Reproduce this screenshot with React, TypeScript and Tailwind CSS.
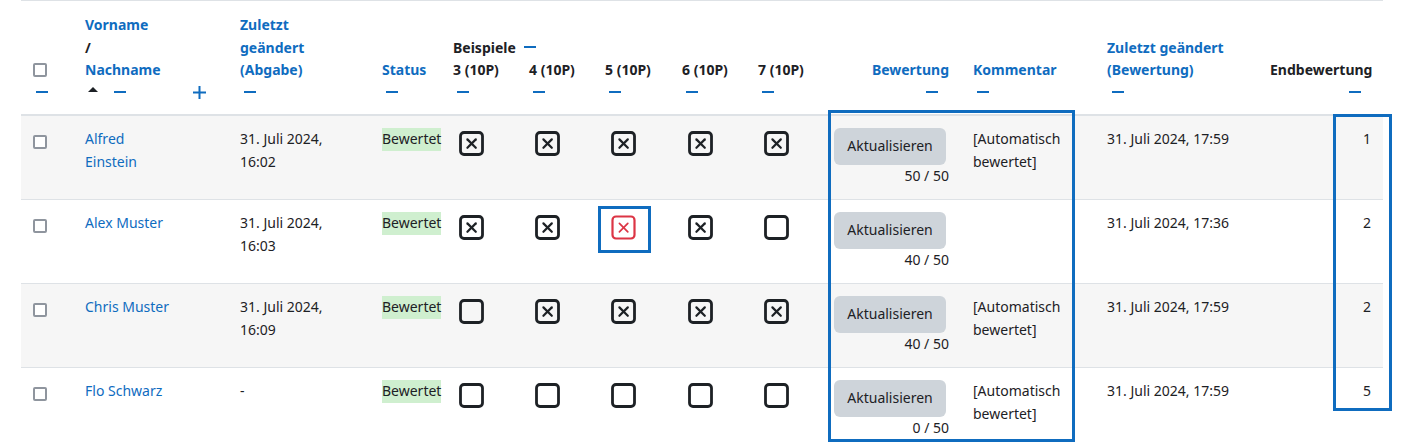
import React from "react";

const COLS =
  "grid grid-cols-[52px_108px_47px_142px_71px_76px_76px_77px_76px_76px_139px_134px_163px_125px]";

function Minus({ right = false, offset = "ml-[4px]" }: { right?: boolean; offset?: string }) {
  return (
    <div className={"flex h-[22.5px] items-center " + (right ? "justify-end" : "justify-start")}>
      <span className={"block h-[2px] w-[12px] shrink-0 bg-[#0f6cbf] -translate-y-[1px] " + offset} />
    </div>
  );
}

function SmallBox() {
  return <span className="block h-[14px] w-[14px] rounded-[2px] border-2 border-[#8f959e] bg-white" />;
}

function CheckIcon({ kind }: { kind: "x" | "empty" | "red" }) {
  const stroke = kind === "red" ? "#dc3545" : "#1d2125";
  return (
    <svg width="26" height="26" viewBox="0 0 26 26" className="ml-[6px] mt-[3px] block">
      <rect
        x="1.5"
        y="1.5"
        width="22"
        height="22"
        rx="3.5"
        fill="none"
        stroke={stroke}
        strokeWidth={kind === "red" ? 2.2 : 2.8}
      />
      {kind !== "empty" && (
        <g stroke={stroke} strokeWidth={kind === "red" ? 1.7 : 2.2} strokeLinecap="round">
          <line x1="8.4" y1="8.4" x2="16.8" y2="16.8" />
          <line x1="16.8" y1="8.4" x2="8.4" y2="16.8" />
        </g>
      )}
    </svg>
  );
}

type Row = {
  name: React.ReactNode;
  date: React.ReactNode;
  checks: ("x" | "empty" | "red")[];
  score: string;
  comment: boolean;
  graded: string;
  final: string;
};

const rows: Row[] = [
  {
    name: (
      <>
        Alfred
        <br />
        Einstein
      </>
    ),
    date: (
      <>
        31. Juli 2024,
        <br />
        16:02
      </>
    ),
    checks: ["x", "x", "x", "x", "x"],
    score: "50 / 50",
    comment: true,
    graded: "31. Juli 2024, 17:59",
    final: "1",
  },
  {
    name: "Alex Muster",
    date: (
      <>
        31. Juli 2024,
        <br />
        16:03
      </>
    ),
    checks: ["x", "x", "red", "x", "empty"],
    score: "40 / 50",
    comment: false,
    graded: "31. Juli 2024, 17:36",
    final: "2",
  },
  {
    name: "Chris Muster",
    date: (
      <>
        31. Juli 2024,
        <br />
        16:09
      </>
    ),
    checks: ["empty", "x", "x", "x", "x"],
    score: "40 / 50",
    comment: true,
    graded: "31. Juli 2024, 17:59",
    final: "2",
  },
  {
    name: "Flo Schwarz",
    date: "-",
    checks: ["empty", "empty", "empty", "empty", "empty"],
    score: "0 / 50",
    comment: true,
    graded: "31. Juli 2024, 17:59",
    final: "5",
  },
];

export default function App() {
  const head = "self-end px-[12px] pb-[10px]";
  const link = "font-bold text-[#0f6cbf]";
  return (
    <div className="relative h-[444px] w-[1406px] overflow-hidden bg-white font-['Noto_Sans',sans-serif] text-[14px] leading-[22.5px] text-[#1d2125]">
      <div className="ml-[21px] w-[1362px]">
        {/* header */}
        <div className={COLS + " h-[116px] border-t border-b-2 border-[#dee2e6]"}>
          <div className={head}>
            <div className="flex h-[22.5px] items-center">
              <SmallBox />
            </div>
            <Minus offset="ml-[3px]" />
          </div>
          <div className={head}>
            <div className={link}>Vorname</div>
            <div className="font-bold">/</div>
            <div className={link}>Nachname</div>
            <div className="flex h-[22.5px] items-center">
              <svg width="10" height="5" viewBox="0 0 10 5" className="ml-[3px] shrink-0 -translate-y-[3px]">
                <polygon points="0,5 5,0 10,5" fill="#1d2125" />
              </svg>
              <span className="ml-[16px] block h-[2px] w-[12px] shrink-0 -translate-y-[1px] bg-[#0f6cbf]" />
            </div>
          </div>
          <div className={head}>
            <div className="flex h-[22.5px] items-center">
              <svg width="13" height="13" viewBox="0 0 13 13" className="block shrink-0">
                <rect x="5.5" y="0" width="2" height="13" fill="#0f6cbf" />
                <rect x="0" y="5.5" width="13" height="2" fill="#0f6cbf" />
              </svg>
            </div>
          </div>
          <div className={head}>
            <div className={link}>Zuletzt</div>
            <div className={link}>geändert</div>
            <div className={link}>(Abgabe)</div>
            <Minus />
          </div>
          <div className={head}>
            <div className={link}>Status</div>
            <Minus />
          </div>
          <div className={head}>
            <div className="flex w-[120px] items-center whitespace-nowrap">
              <span className="font-bold">Beispiele</span>
              <span className="ml-[8px] block h-[2px] w-[12px] shrink-0 -translate-y-[1px] bg-[#0f6cbf]" />
            </div>
            <div className="whitespace-nowrap font-bold">3 (10P)</div>
            <Minus />
          </div>
          {["4 (10P)", "5 (10P)", "6 (10P)", "7 (10P)"].map((t) => (
            <div key={t} className={head}>
              <div className="whitespace-nowrap font-bold">{t}</div>
              <Minus />
            </div>
          ))}
          <div className={head + " text-right"}>
            <div className={link}>Bewertung</div>
            <Minus right offset="mr-[11px]" />
          </div>
          <div className={head}>
            <div className={link}>Kommentar</div>
            <Minus />
          </div>
          <div className={head}>
            <div className={link}>Zuletzt geändert</div>
            <div className={link}>(Bewertung)</div>
            <Minus offset="ml-[5px]" />
          </div>
          <div className={head + " text-right"}>
            <div className="font-bold">Endbewertung</div>
            <Minus right offset="mr-[10px]" />
          </div>
        </div>

        {/* body */}
        {rows.map((r, i) => (
          <div
            key={i}
            className={
              COLS +
              " h-[84px] border-b border-[#dee2e6] " +
              (i % 2 === 0 ? "bg-[#f6f6f6]" : "bg-white")
            }
          >
            <div className="px-[12px] pt-[12px]">
              <div className="mt-[7px]">
                <SmallBox />
              </div>
            </div>
            <div className="whitespace-nowrap px-[12px] pt-[12px] text-[#0f6cbf]">{r.name}</div>
            <div className="px-[12px] pt-[12px]" />
            <div className="px-[12px] pt-[12px]">{r.date}</div>
            <div className="px-[12px] pt-[12px]">
              <span className="inline-block whitespace-nowrap bg-[#cfefcf]">Bewertet</span>
            </div>
            {r.checks.map((c, j) => (
              <div key={j} className="px-[12px] pt-[12px]">
                <CheckIcon kind={c} />
              </div>
            ))}
            <div className="px-[12px] pt-[12px]">
              <div className="flex h-[37px] w-[112px] items-center justify-center rounded-[6px] bg-[#ced4da]">
                Aktualisieren
              </div>
              <div className="text-right">{r.score}</div>
            </div>
            <div className="px-[12px] pt-[12px]">
              {r.comment && (
                <>
                  [Automatisch
                  <br />
                  bewertet]
                </>
              )}
            </div>
            <div className="whitespace-nowrap px-[12px] pt-[12px]">{r.graded}</div>
            <div className="px-[12px] pt-[12px] text-right">{r.final}</div>
          </div>
        ))}
      </div>

      {/* highlight annotations */}
      <div className="pointer-events-none absolute left-[828px] top-[110px] h-[332px] w-[247px] border-[3px] border-[#0f6cbf]" />
      <div className="pointer-events-none absolute left-[1333px] top-[114px] h-[297px] w-[59px] border-[3px] border-[#0f6cbf]" />
      <div className="pointer-events-none absolute left-[598px] top-[206px] h-[47px] w-[53px] border-[3px] border-[#0f6cbf]" />
    </div>
  );
}
